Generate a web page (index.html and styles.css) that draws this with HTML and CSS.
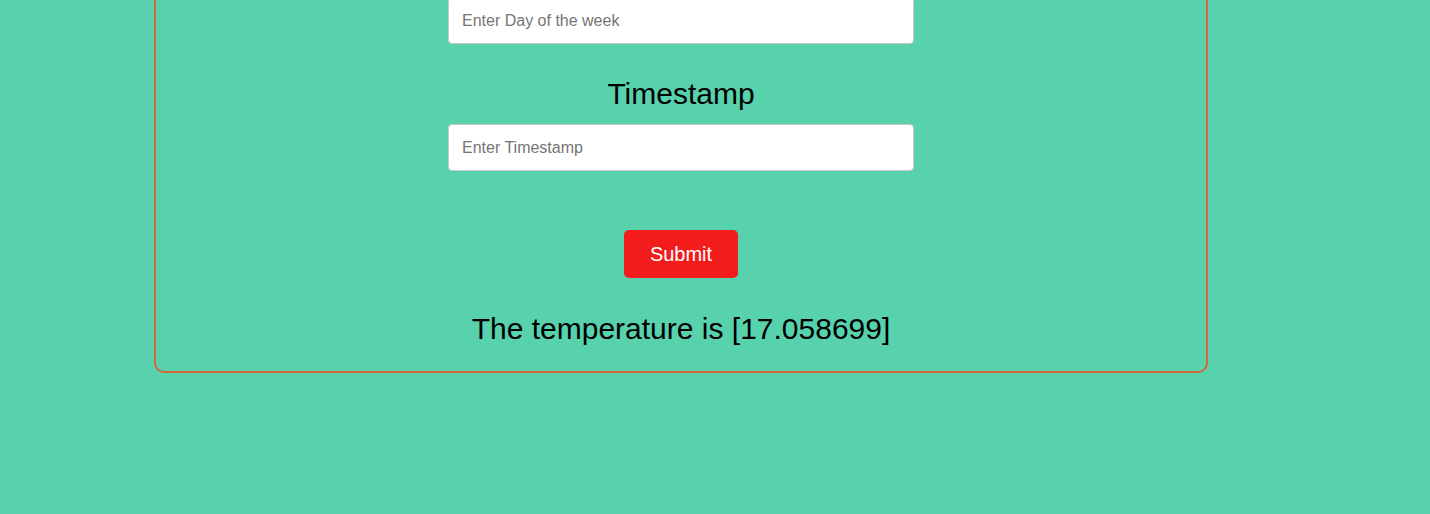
FILE: index.html
```html
<!DOCTYPE html>
<html lang="en">
<head>
<meta charset="utf-8">
<title>Temperature Predictor</title>
<link rel="stylesheet" href="styles.css">
</head>
<body>
<div class="card">
  <form class="form">
    <input class="field" type="text" placeholder="Enter Day of the week">
    <label class="label">Timestamp</label>
    <input class="field field-ts" type="text" placeholder="Enter Timestamp">
    <button class="submit" type="button">Submit</button>
  </form>
  <p class="result">The temperature is [17.058699]</p>
</div>
</body>
</html>
```
FILE: styles.css
```css
html, body {
  margin: 0;
  padding: 0;
  background: #57d2ad;
  font-family: "Liberation Sans", Arial, sans-serif;
  height: 100%;
}
.card {
  box-sizing: border-box;
  width: 1054px;
  margin: -60px 0 0 154px;
  padding: 55px 0 25px;
  border: 2px solid #d2693b;
  border-radius: 10px;
}
.form {
  display: flex;
  flex-direction: column;
  align-items: center;
  margin: 0;
}
.field {
  box-sizing: border-box;
  width: 466px;
  height: 47px;
  padding: 0 13px;
  border: 1px solid #c9c9c9;
  border-radius: 4px;
  background: #fff;
  font-family: "Liberation Sans", Arial, sans-serif;
  font-size: 16px;
  color: #333;
  outline: none;
}
.field::placeholder {
  color: #757575;
}
.label {
  display: block;
  margin: 33px 0 13px;
  font-size: 30px;
  line-height: 34px;
  color: #000;
}
.submit {
  margin-top: 59px;
  width: 114px;
  height: 48px;
  border: none;
  border-radius: 5px;
  background: #f31c1c;
  color: #fff;
  font-family: "Liberation Sans", Arial, sans-serif;
  font-size: 20px;
  cursor: pointer;
}
.result {
  margin: 34px 0 0;
  text-align: center;
  font-size: 30px;
  line-height: 34px;
  color: #000;
}
```
